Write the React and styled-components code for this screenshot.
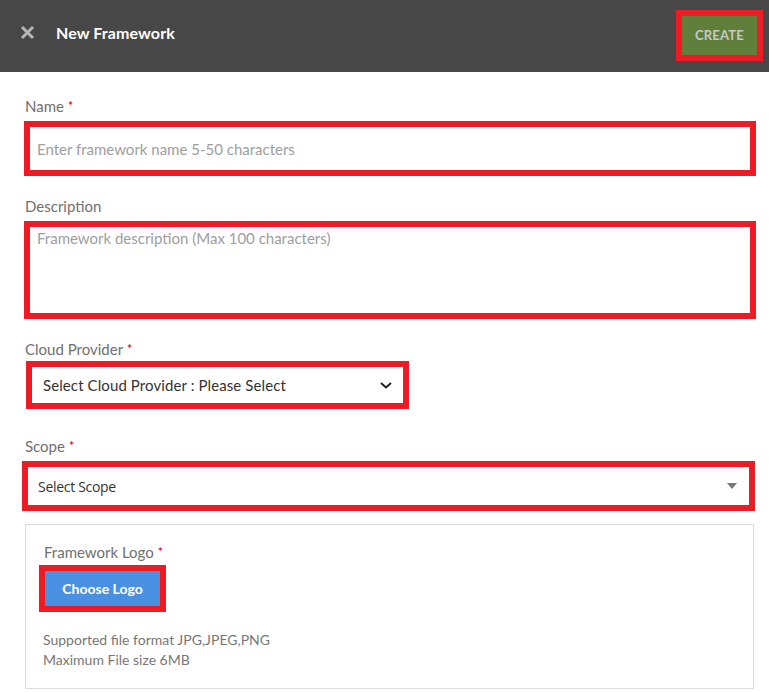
import React from "react";
import styled, { createGlobalStyle } from "styled-components";

const Global = createGlobalStyle`
  html, body { margin: 0; padding: 0; background: #fff; }
  body { font-family: "Lato", "Noto Sans", sans-serif; }
  * { box-sizing: border-box; }
`;

const RED = "#ed1c24";

const Header = styled.header`
  height: 72px;
  background: #474747;
  display: flex;
  align-items: center;
  padding: 0 12px 0 19px;
`;

const CloseBtn = styled.button`
  width: 16px;
  height: 16px;
  padding: 0;
  border: 0;
  background: transparent;
  display: flex;
  align-items: center;
  justify-content: center;
  margin-top: -8px;
`;

const Title = styled.h1`
  margin: -8px 0 0 21px;
  font-size: 16px;
  font-weight: 700;
  color: #fff;
  flex: 1;
  letter-spacing: 0.1px;
`;

const CreateButton = styled.button`
  width: 75px;
  height: 39px;
  margin-top: -2px;
  background: #5f7f3a;
  border: 0;
  outline: 6px solid ${RED};
  color: #c9c9c9;
  font-family: "Lato", sans-serif;
  font-weight: 700;
  font-size: 13px;
  letter-spacing: 0.2px;
`;

const Form = styled.main`
  padding: 25px 13px 0 24px;
  display: flex;
  flex-direction: column;
`;

const Field = styled.div`
  display: flex;
  flex-direction: column;
  margin-bottom: ${(p) => p.$mb || 0}px;
`;

const Label = styled.label`
  font-size: 15px;
  line-height: 18px;
  color: #707070;
  margin-bottom: ${(p) => p.$gap || 6}px;
  margin-left: 1px;
`;

const Star = styled.span`
  color: #e8101a;
  font-weight: 700;
  margin-left: 4px;
  font-size: 12px;
  vertical-align: top;
`;

const Box = styled.div`
  border: 6px solid ${RED};
  height: ${(p) => p.$h}px;
  width: ${(p) => p.$w || "auto"};
  margin-left: ${(p) => p.$ml || 0}px;
  margin-right: ${(p) => p.$mr || 0}px;
  display: flex;
  align-items: ${(p) => (p.$top ? "flex-start" : "center")};
  padding: ${(p) => (p.$top ? "2px 7px" : "0 7px")};
  background: #fff;
`;

const Placeholder = styled.span`
  font-size: 15px;
  color: #9e9e9e;
  flex: 1;
`;

const SelectText = styled.span`
  font-family: ${(p) => (p.$alt ? '"Open Sans", sans-serif' : '"Lato", sans-serif')};
  font-size: ${(p) => (p.$alt ? 14 : 15)}px;
  color: #333;
  flex: 1;
  padding-left: ${(p) => p.$pl || 0}px;
  letter-spacing: ${(p) => (p.$alt ? "-0.3px" : "0.1px")};
`;

const Panel = styled.section`
  border: 1px solid #dcdcdc;
  margin: 0 2px 0 1px;
  padding: 18px 17px 18px 17px;
  display: flex;
  flex-direction: column;
  align-items: flex-start;
`;

const ChooseButton = styled.button`
  margin: 5px 0 0 2px;
  width: 115px;
  height: 35px;
  background: #4a90e2;
  border: 0;
  outline: 6px solid ${RED};
  color: #fff;
  font-family: "Lato", sans-serif;
  font-weight: 700;
  font-size: 14px;
`;

const Hint = styled.p`
  margin: 24px 0 0 0;
  font-size: 14px;
  line-height: 20px;
  color: #777;
`;

export default function App() {
  return (
    <>
      <Global />
      <Header>
        <CloseBtn aria-label="close">
          <svg width="15" height="15" viewBox="0 0 15 15">
            <path d="M2 2 L13 13 M13 2 L2 13" stroke="#b5b5b5" strokeWidth="3" strokeLinecap="butt" />
          </svg>
        </CloseBtn>
        <Title>New Framework</Title>
        <CreateButton>CREATE</CreateButton>
      </Header>
      <Form>
        <Field $mb={21}>
          <Label $gap={6}>Name<Star>*</Star></Label>
          <Box $h={55}>
            <Placeholder>Enter framework name 5-50 characters</Placeholder>
          </Box>
        </Field>
        <Field $mb={21}>
          <Label $gap={6}>Description</Label>
          <Box $h={98} $top>
            <Placeholder>Framework description (Max 100 characters)</Placeholder>
          </Box>
        </Field>
        <Field $mb={28}>
          <Label $gap={3}>Cloud Provider<Star>*</Star></Label>
          <Box $h={48} $w="383px" $ml={2}>
            <SelectText $pl={4}>Select Cloud Provider : Please Select</SelectText>
            <svg width="14" height="10" viewBox="0 0 14 10" style={{ marginRight: 3 }}>
              <path d="M2 3 L7 7.5 L12 3" stroke="#222" strokeWidth="2" fill="none" />
            </svg>
          </Box>
        </Field>
        <Field $mb={13}>
          <Label $gap={6}>Scope<Star>*</Star></Label>
          <Box $h={50} $ml={-2} $mr={1}>
            <SelectText $alt $pl={3}>Select Scope</SelectText>
            <svg width="10" height="6" viewBox="0 0 10 6" style={{ marginRight: 5 }}>
              <path d="M0 0 L10 0 L5 6 Z" fill="#777" />
            </svg>
          </Box>
        </Field>
        <Panel>
          <Label $gap={5}>Framework Logo<Star>*</Star></Label>
          <ChooseButton>Choose Logo</ChooseButton>
          <Hint>
            Supported file format JPG,JPEG,PNG
            <br />
            Maximum File size 6MB
          </Hint>
        </Panel>
      </Form>
    </>
  );
}
